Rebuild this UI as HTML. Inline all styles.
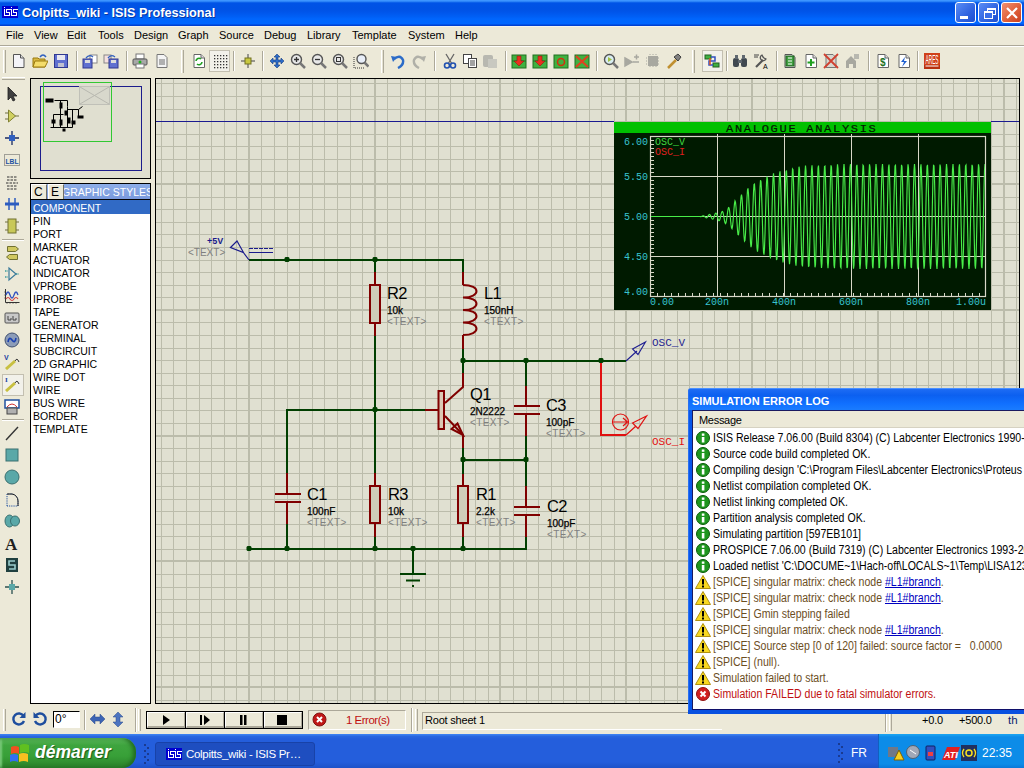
<!DOCTYPE html><html><head><meta charset="utf-8"><title>Colpitts_wiki - ISIS Professional</title><style>
*{margin:0;padding:0;box-sizing:border-box}
html,body{width:1024px;height:768px;overflow:hidden;background:#ECE9D8;font-family:"Liberation Sans",sans-serif;font-size:11px;color:#000}
.a{position:absolute}
.t{position:absolute;white-space:pre;line-height:1}
</style></head><body>
<div class="a" style="left:0;top:0;width:1024px;height:26px;background:linear-gradient(#3D95FF 0px,#3D95FF 1px,#1870F0 2px,#0053E6 3px,#0052E4 9px,#0055EA 12px,#0060F6 17px,#0066FD 19px,#0066FF 24px,#0040D0 25px,#0040D0 26px)"></div>
<svg class="a" style="left:2px;top:6px" width="16" height="12"><rect width="16" height="12" fill="#0000D0"/><rect x="2" y="1" width="1" height="1" fill="#fff"/><rect x="2" y="3" width="1" height="7" fill="#fff"/><rect x="2" y="9" width="6" height="1" fill="#fff"/><rect x="7" y="6" width="1" height="4" fill="#fff"/><rect x="4" y="6" width="4" height="1" fill="#fff"/><rect x="4" y="3" width="1" height="4" fill="#fff"/><rect x="4" y="3" width="5" height="1" fill="#fff"/><rect x="9" y="1" width="1" height="1" fill="#fff"/><rect x="9" y="3" width="1" height="7" fill="#fff"/><rect x="9" y="9" width="6" height="1" fill="#fff"/><rect x="14" y="6" width="1" height="4" fill="#fff"/><rect x="11" y="6" width="4" height="1" fill="#fff"/><rect x="11" y="3" width="1" height="4" fill="#fff"/><rect x="11" y="3" width="5" height="1" fill="#fff"/></svg>
<div class="t" style="left:23px;top:8px;font-size:12.7px;font-weight:bold;color:#0A1E70;opacity:.6">Colpitts_wiki - ISIS Professional</div>
<div class="t" style="left:22px;top:7px;font-size:12.7px;font-weight:bold;color:#fff">Colpitts_wiki - ISIS Professional</div>
<div class="a" style="left:955px;top:2px;width:21px;height:21px;border:1px solid #fff;border-radius:3px;background:linear-gradient(135deg,#5A8DF5,#2F63E0 60%,#1E4FD0)"><div class="a" style="left:4px;top:13px;width:8px;height:3px;background:#fff"></div></div>
<div class="a" style="left:978px;top:2px;width:21px;height:21px;border:1px solid #fff;border-radius:3px;background:linear-gradient(135deg,#5A8DF5,#2F63E0 60%,#1E4FD0)"><div class="a" style="left:8px;top:5px;width:9px;height:7px;border:1px solid #fff;border-top-width:2px"></div><div class="a" style="left:5px;top:8px;width:9px;height:8px;border:1px solid #fff;border-top-width:2px;background:#3A6EE8"></div></div>
<div class="a" style="left:1001px;top:2px;width:21px;height:21px;border:1px solid #fff;border-radius:3px;background:linear-gradient(135deg,#F09070,#E0603A 55%,#C84020)"><svg class="a" style="left:4px;top:4px" width="12" height="12"><path d="M1 1L11 11M11 1L1 11" stroke="#fff" stroke-width="2.2"/></svg></div>
<div class="a" style="left:0;top:26px;width:1024px;height:1px;background:#F4F3EE"></div>
<div class="t" style="left:6px;top:30px;font-size:11px">File</div>
<div class="t" style="left:34px;top:30px;font-size:11px">View</div>
<div class="t" style="left:67px;top:30px;font-size:11px">Edit</div>
<div class="t" style="left:98px;top:30px;font-size:11px">Tools</div>
<div class="t" style="left:134px;top:30px;font-size:11px">Design</div>
<div class="t" style="left:178px;top:30px;font-size:11px">Graph</div>
<div class="t" style="left:219px;top:30px;font-size:11px">Source</div>
<div class="t" style="left:264px;top:30px;font-size:11px">Debug</div>
<div class="t" style="left:307px;top:30px;font-size:11px">Library</div>
<div class="t" style="left:352px;top:30px;font-size:11px">Template</div>
<div class="t" style="left:408px;top:30px;font-size:11px">System</div>
<div class="t" style="left:455px;top:30px;font-size:11px">Help</div>
<div class="a" style="left:0;top:45px;width:1024px;height:1px;background:#ACA899"></div>
<div class="a" style="left:0;top:46px;width:1024px;height:1px;background:#fff"></div>
<div class="a" style="left:3px;top:50px;width:3px;height:23px;border-left:1px solid #fff;border-right:1px solid #ACA899;background:#E6E3D3"></div>
<div class="a" style="left:76px;top:51px;width:2px;height:20px;border-left:1px solid #ACA899;border-right:1px solid #fff"></div>
<div class="a" style="left:126px;top:51px;width:2px;height:20px;border-left:1px solid #ACA899;border-right:1px solid #fff"></div>
<div class="a" style="left:233px;top:51px;width:2px;height:20px;border-left:1px solid #ACA899;border-right:1px solid #fff"></div>
<div class="a" style="left:262px;top:51px;width:2px;height:20px;border-left:1px solid #ACA899;border-right:1px solid #fff"></div>
<div class="a" style="left:434px;top:51px;width:2px;height:20px;border-left:1px solid #ACA899;border-right:1px solid #fff"></div>
<div class="a" style="left:505px;top:51px;width:2px;height:20px;border-left:1px solid #ACA899;border-right:1px solid #fff"></div>
<div class="a" style="left:596px;top:51px;width:2px;height:20px;border-left:1px solid #ACA899;border-right:1px solid #fff"></div>
<div class="a" style="left:726px;top:51px;width:2px;height:20px;border-left:1px solid #ACA899;border-right:1px solid #fff"></div>
<div class="a" style="left:776px;top:51px;width:2px;height:20px;border-left:1px solid #ACA899;border-right:1px solid #fff"></div>
<div class="a" style="left:868px;top:51px;width:2px;height:20px;border-left:1px solid #ACA899;border-right:1px solid #fff"></div>
<div class="a" style="left:917px;top:51px;width:2px;height:20px;border-left:1px solid #ACA899;border-right:1px solid #fff"></div>
<div class="a" style="left:181px;top:50px;width:3px;height:23px;border-left:1px solid #fff;border-right:1px solid #ACA899;background:#E6E3D3"></div>
<div class="a" style="left:381px;top:50px;width:3px;height:23px;border-left:1px solid #fff;border-right:1px solid #ACA899;background:#E6E3D3"></div>
<div class="a" style="left:692px;top:50px;width:3px;height:23px;border-left:1px solid #fff;border-right:1px solid #ACA899;background:#E6E3D3"></div>
<div class="a" style="left:209px;top:50px;width:21px;height:22px;border:1px solid #C3BFB0;background:#F2F1EA"></div>
<div class="a" style="left:702px;top:50px;width:21px;height:22px;border:1px solid #C3BFB0;background:#F2F1EA"></div>
<svg class="a" style="left:12px;top:53px;" width="16" height="16" viewBox="0 0 16 16"><path d="M1.5 1.5h7l3.5 3.5v9.5H1.5z" fill="#F4F4F8" stroke="#555"/><path d="M8.5 1.5v3.5H12" fill="#ddd" stroke="#555"/></svg>
<svg class="a" style="left:32px;top:53px;" width="16" height="16" viewBox="0 0 16 16"><path d="M1 5h5l1 1h6v8H1z" fill="#D8B840" stroke="#9A7A10"/><path d="M3 8h13l-3 6H1z" fill="#F4DC6A" stroke="#9A7A10"/><path d="M8 4q3-4 6 0" fill="none" stroke="#3060C0" stroke-width="1.5"/></svg>
<svg class="a" style="left:53px;top:53px;" width="16" height="16" viewBox="0 0 16 16"><rect x="1.5" y="1.5" width="13" height="13" fill="#6070D0" stroke="#303890"/><rect x="4" y="2" width="8" height="5" fill="#E8E8F0"/><rect x="5" y="10" width="6" height="4" fill="#C0C0D0"/></svg>
<svg class="a" style="left:82px;top:53px;" width="16" height="16" viewBox="0 0 16 16"><rect x="8" y="2" width="7" height="8" fill="#fff" stroke="#888"/><rect x="1" y="6" width="9" height="9" fill="#6070D0" stroke="#303890"/><rect x="3" y="7" width="5" height="3" fill="#ddd"/><path d="M4 5q3-4 7-1" fill="none" stroke="#3060C0" stroke-width="1.3"/></svg>
<svg class="a" style="left:103px;top:53px;" width="16" height="16" viewBox="0 0 16 16"><rect x="1" y="2" width="7" height="8" fill="#F4E0E0" stroke="#888"/><rect x="6" y="6" width="9" height="9" fill="#6070D0" stroke="#303890"/><rect x="8" y="7" width="5" height="3" fill="#ddd"/><path d="M5 5q3-4 7-1" fill="none" stroke="#3060C0" stroke-width="1.3"/></svg>
<svg class="a" style="left:132px;top:53px;" width="16" height="16" viewBox="0 0 16 16"><rect x="4" y="1" width="8" height="5" fill="#fff" stroke="#777"/><rect x="1" y="6" width="14" height="6" rx="1" fill="#A8A8A8" stroke="#555"/><rect x="4" y="11" width="8" height="4" fill="#fff" stroke="#777"/><circle cx="8" cy="9" r="1.5" fill="#20B020"/></svg>
<svg class="a" style="left:154px;top:53px;" width="16" height="16" viewBox="0 0 16 16"><path d="M3 1.5h7l3 3v10H3z" fill="#F4F4F4" stroke="#777"/><rect x="5" y="6" width="6" height="6" fill="#B0B0B0"/></svg>
<svg class="a" style="left:191px;top:53px;" width="16" height="16" viewBox="0 0 16 16"><path d="M3 1.5h7l3.5 3.5v9.5h-10.5z" fill="#fff" stroke="#666" /><path d="M10 1.5v3.5h3.5" fill="#ddd" stroke="#666"/><path d="M5 8a3 3 0 0 1 5-2M11 9a3 3 0 0 1-5 2" fill="none" stroke="#20A020" stroke-width="1.6"/></svg>
<svg class="a" style="left:212px;top:53px;" width="16" height="16" viewBox="0 0 16 16"><rect x="2" y="2" width="1.3" height="1.3" fill="#333"/><rect x="2" y="5" width="1.3" height="1.3" fill="#333"/><rect x="2" y="8" width="1.3" height="1.3" fill="#333"/><rect x="2" y="11" width="1.3" height="1.3" fill="#333"/><rect x="2" y="14" width="1.3" height="1.3" fill="#333"/><rect x="5" y="2" width="1.3" height="1.3" fill="#333"/><rect x="5" y="5" width="1.3" height="1.3" fill="#333"/><rect x="5" y="8" width="1.3" height="1.3" fill="#333"/><rect x="5" y="11" width="1.3" height="1.3" fill="#333"/><rect x="5" y="14" width="1.3" height="1.3" fill="#333"/><rect x="8" y="2" width="1.3" height="1.3" fill="#333"/><rect x="8" y="5" width="1.3" height="1.3" fill="#333"/><rect x="8" y="8" width="1.3" height="1.3" fill="#333"/><rect x="8" y="11" width="1.3" height="1.3" fill="#333"/><rect x="8" y="14" width="1.3" height="1.3" fill="#333"/><rect x="11" y="2" width="1.3" height="1.3" fill="#333"/><rect x="11" y="5" width="1.3" height="1.3" fill="#333"/><rect x="11" y="8" width="1.3" height="1.3" fill="#333"/><rect x="11" y="11" width="1.3" height="1.3" fill="#333"/><rect x="11" y="14" width="1.3" height="1.3" fill="#333"/><rect x="14" y="2" width="1.3" height="1.3" fill="#333"/><rect x="14" y="5" width="1.3" height="1.3" fill="#333"/><rect x="14" y="8" width="1.3" height="1.3" fill="#333"/><rect x="14" y="11" width="1.3" height="1.3" fill="#333"/><rect x="14" y="14" width="1.3" height="1.3" fill="#333"/></svg>
<svg class="a" style="left:240px;top:53px;" width="16" height="16" viewBox="0 0 16 16"><path d="M8 1v14M1 8h14" stroke="#444" stroke-width="1"/><rect x="5" y="5" width="6" height="6" fill="#C8C840" stroke="#707020"/></svg>
<svg class="a" style="left:269px;top:53px;" width="16" height="16" viewBox="0 0 16 16"><path d="M8 1l3 3H9v3h3V5l3 3-3 3V9H9v3h2l-3 3-3-3h2V9H4v2L1 8l3-3v2h3V4H5z" fill="#2C6CC8" stroke="#1A3E80" stroke-width=".6"/></svg>
<svg class="a" style="left:290px;top:53px;" width="16" height="16" viewBox="0 0 16 16"><circle cx="6.5" cy="6.5" r="5" fill="#E8E8E8" stroke="#555" stroke-width="1.4"/><path d="M10 10l5 5" stroke="#777" stroke-width="2.5"/><path d="M4 6.5h5M6.5 4v5" stroke="#333" stroke-width="1.3"/></svg>
<svg class="a" style="left:311px;top:53px;" width="16" height="16" viewBox="0 0 16 16"><circle cx="6.5" cy="6.5" r="5" fill="#E8E8E8" stroke="#555" stroke-width="1.4"/><path d="M10 10l5 5" stroke="#777" stroke-width="2.5"/><path d="M4 6.5h5" stroke="#333" stroke-width="1.3"/></svg>
<svg class="a" style="left:332px;top:53px;" width="16" height="16" viewBox="0 0 16 16"><circle cx="6.5" cy="6.5" r="5" fill="#E8E8E8" stroke="#555" stroke-width="1.4"/><path d="M10 10l5 5" stroke="#777" stroke-width="2.5"/><rect x="4.5" y="4.5" width="4" height="4" fill="none" stroke="#333"/></svg>
<svg class="a" style="left:353px;top:53px;" width="16" height="16" viewBox="0 0 16 16"><path d="M1 4v11h10" fill="none" stroke="#333" stroke-dasharray="1 1"/><circle cx="8.5" cy="6" r="4.5" fill="#E8EEF8" stroke="#555" stroke-width="1.4"/><path d="M11.5 9.5l4 4" stroke="#777" stroke-width="2.5"/></svg>
<svg class="a" style="left:390px;top:53px;" width="16" height="16" viewBox="0 0 16 16"><path d="M4 6q6-5 9 1q1 5-5 8" fill="none" stroke="#2C6CC8" stroke-width="2.4"/><path d="M1 3l6 1-4 5z" fill="#2C6CC8"/></svg>
<svg class="a" style="left:411px;top:53px;" width="16" height="16" viewBox="0 0 16 16"><path d="M12 6q-6-5-9 1q-1 5 5 8" fill="none" stroke="#B0B0A8" stroke-width="2.4"/><path d="M15 3l-6 1 4 5z" fill="#B0B0A8"/></svg>
<svg class="a" style="left:442px;top:53px;" width="16" height="16" viewBox="0 0 16 16"><path d="M4 1l6 10M12 1L6 11" stroke="#666" stroke-width="1.3"/><circle cx="5" cy="12.5" r="2.5" fill="none" stroke="#2050B0" stroke-width="1.6"/><circle cx="11" cy="12.5" r="2.5" fill="none" stroke="#2050B0" stroke-width="1.6"/></svg>
<svg class="a" style="left:462px;top:53px;" width="16" height="16" viewBox="0 0 16 16"><rect x="1.5" y="1.5" width="8" height="9" fill="#fff" stroke="#444"/><rect x="6.5" y="5.5" width="8" height="9" fill="#fff" stroke="#444"/><path d="M8 8h5M8 10h5M8 12h5" stroke="#444"/></svg>
<svg class="a" style="left:482px;top:53px;" width="16" height="16" viewBox="0 0 16 16"><rect x="1" y="2" width="10" height="12" rx="2" fill="#B8B8B0"/><rect x="6" y="6" width="9" height="9" fill="#C8C8C0"/></svg>
<svg class="a" style="left:511px;top:53px;" width="16" height="16" viewBox="0 0 16 16"><rect x="1" y="2" width="14" height="13" fill="#40B040" stroke="#207020"/><path d="M1 8h14" stroke="#207020"/><path d="M6 3h4v5h3l-5 5-5-5h3z" fill="#E83020" stroke="#902010" stroke-width=".6"/></svg>
<svg class="a" style="left:532px;top:53px;" width="16" height="16" viewBox="0 0 16 16"><rect x="1" y="2" width="14" height="13" fill="#40B040" stroke="#207020"/><path d="M1 8h14" stroke="#207020"/><path d="M6 3h4v5h3l-5 5-5-5h3z" fill="#E83020" stroke="#902010" stroke-width=".6"/></svg>
<svg class="a" style="left:553px;top:53px;" width="16" height="16" viewBox="0 0 16 16"><rect x="1" y="2" width="14" height="13" fill="#40B040" stroke="#207020"/><circle cx="8" cy="9" r="3.5" fill="none" stroke="#D03010" stroke-width="1.5"/></svg>
<svg class="a" style="left:574px;top:53px;" width="16" height="16" viewBox="0 0 16 16"><rect x="1" y="2" width="14" height="13" fill="#40B040" stroke="#207020"/><path d="M2 3l12 11M14 3L2 14" stroke="#E04020" stroke-width="2"/></svg>
<svg class="a" style="left:603px;top:53px;" width="16" height="16" viewBox="0 0 16 16"><circle cx="6.5" cy="6.5" r="5" fill="#D8ECF0" stroke="#555" stroke-width="1.4"/><path d="M5 4v5l4-2.5z" fill="#A0C040"/><path d="M10 10l5 5" stroke="#777" stroke-width="2.5"/></svg>
<svg class="a" style="left:624px;top:53px;" width="16" height="16" viewBox="0 0 16 16"><path d="M1 5l7 4-7 4zM10 4h5M12.5 1.5v5M9 9h6" fill="#A8A8A0" stroke="#A8A8A0" stroke-width="1.5"/></svg>
<svg class="a" style="left:645px;top:53px;" width="16" height="16" viewBox="0 0 16 16"><rect x="3" y="3" width="10" height="10" fill="#A8A8A0"/><path d="M1 5h14M1 8h14M1 11h14M5 1v14M8 1v14M11 1v14" stroke="#A8A8A0" stroke-dasharray="1 2"/></svg>
<svg class="a" style="left:666px;top:53px;" width="16" height="16" viewBox="0 0 16 16"><path d="M2 15l8-8" stroke="#C09030" stroke-width="2.5"/><path d="M8 4l4-3 3 3-3 4z" fill="#808080" stroke="#404040"/></svg>
<svg class="a" style="left:704px;top:53px;" width="16" height="16" viewBox="0 0 16 16"><rect x="1" y="2" width="6" height="4" fill="#40B040" stroke="#206020"/><rect x="9" y="10" width="6" height="4" fill="#40B040" stroke="#206020"/><path d="M7 4h4v4H5v4h4" fill="none" stroke="#3050C0" stroke-width="1.5"/><path d="M6 5v7" stroke="#E05020" stroke-width="1.5"/></svg>
<svg class="a" style="left:732px;top:53px;" width="16" height="16" viewBox="0 0 16 16"><rect x="1" y="5" width="6" height="9" rx="2" fill="#404850"/><rect x="9" y="5" width="6" height="9" rx="2" fill="#404850"/><rect x="3" y="2" width="3" height="4" fill="#606870"/><rect x="10" y="2" width="3" height="4" fill="#606870"/><rect x="6" y="7" width="4" height="3" fill="#606870"/></svg>
<svg class="a" style="left:753px;top:53px;" width="16" height="16" viewBox="0 0 16 16"><path d="M1 2h5M1 4h4" stroke="#444"/><path d="M3 14l7-7" stroke="#555" stroke-width="2.2"/><path d="M9 2a3 3 0 1 0 4 4l-2-1-1-1z" fill="none" stroke="#555" stroke-width="1.3"/><text x="10" y="15.5" font-size="7" font-family="Liberation Sans" fill="#000">A</text></svg>
<svg class="a" style="left:782px;top:53px;" width="16" height="16" viewBox="0 0 16 16"><path d="M3 1.5h7l3 3v10H3z" fill="#fff" stroke="#555"/><rect x="4" y="3" width="8" height="10" fill="#40A040" stroke="#206020"/><path d="M6 5h4M6 8h4M6 11h4" stroke="#fff"/></svg>
<svg class="a" style="left:803px;top:53px;" width="16" height="16" viewBox="0 0 16 16"><path d="M3 1.5h7l3.5 3.5v9.5h-10.5z" fill="#fff" stroke="#666" /><path d="M10 1.5v3.5h3.5" fill="#ddd" stroke="#666"/><path d="M8 6v7M4.5 9.5h7" stroke="#20A020" stroke-width="2"/></svg>
<svg class="a" style="left:823px;top:53px;" width="16" height="16" viewBox="0 0 16 16"><path d="M3 1.5h7l3 3v10H3z" fill="#D8D8D0" stroke="#777"/><path d="M1 1l14 14M15 1L1 15" stroke="#D04030" stroke-width="1.8"/></svg>
<svg class="a" style="left:844px;top:53px;" width="16" height="16" viewBox="0 0 16 16"><path d="M2 15V8l5-5 5 5v7h-3v-4H5v4z" fill="#A8A8A0"/><rect x="10" y="1" width="5" height="5" fill="#B8B8B0"/></svg>
<svg class="a" style="left:875px;top:53px;" width="16" height="16" viewBox="0 0 16 16"><path d="M3 1.5h7l3.5 3.5v9.5h-10.5z" fill="#fff" stroke="#666" /><path d="M10 1.5v3.5h3.5" fill="#ddd" stroke="#666"/><text x="5" y="13" font-size="10" font-family="Liberation Sans" font-weight="bold" fill="#207020">$</text></svg>
<svg class="a" style="left:896px;top:53px;" width="16" height="16" viewBox="0 0 16 16"><path d="M3 1.5h7l3.5 3.5v9.5h-10.5z" fill="#fff" stroke="#666" /><path d="M10 1.5v3.5h3.5" fill="#ddd" stroke="#666"/><path d="M9 4l-4 5h3l-2 5 5-6H8z" fill="#2060D0"/></svg>
<svg class="a" style="left:924px;top:53px;" width="16" height="16" viewBox="0 0 16 16"><rect x="0" y="0" width="16" height="16" fill="#D04018"/><rect x="0" y="12" width="16" height="4" fill="#B83010"/><text x="1.5" y="11" font-size="12" font-family="Liberation Sans" fill="#fff" textLength="13" lengthAdjust="spacingAndGlyphs">ARES</text><path d="M1.5 13h13" stroke="#fff"/></svg>
<div class="a" style="left:0;top:76px;width:1024px;height:1px;background:#ECE9D8"></div>
<div class="a" style="left:2px;top:77px;width:23px;height:3px;border-top:1px solid #fff;border-bottom:1px solid #ACA899;background:#E6E3D3"></div>
<div class="a" style="left:2px;top:239px;width:22px;height:2px;border-top:1px solid #ACA899;border-bottom:1px solid #fff"></div>
<div class="a" style="left:2px;top:419px;width:22px;height:2px;border-top:1px solid #ACA899;border-bottom:1px solid #fff"></div>
<div class="a" style="left:2px;top:374px;width:22px;height:22px;border:1px solid #C3BFB0;background:#F2F1EA"></div>
<svg class="a" style="left:4px;top:86px;" width="16" height="16" viewBox="0 0 16 16"><path d="M4 1v13l3-3 2 4 2-1-2-4h4z" fill="#404040" stroke="#202020" stroke-width=".8"/></svg>
<svg class="a" style="left:4px;top:108px;" width="16" height="16" viewBox="0 0 16 16"><path d="M1 5h4M1 11h4M11 8h4" stroke="#707040" stroke-width="1.2"/><path d="M4.5 2v12l7-6z" fill="#D0D060" stroke="#808030"/></svg>
<svg class="a" style="left:4px;top:130px;" width="16" height="16" viewBox="0 0 16 16"><path d="M8 1v14M1 8h14" stroke="#1A2A60" stroke-width="1.3"/><rect x="5" y="5" width="6" height="6" fill="#3060C0"/></svg>
<svg class="a" style="left:4px;top:152px;" width="16" height="16" viewBox="0 0 16 16"><rect x="0.5" y="2.5" width="15" height="11" fill="none" stroke="#555" stroke-dasharray="1 1"/><text x="1.5" y="11.5" font-size="8" font-weight="bold" font-family="Liberation Sans" fill="#2050A0" textLength="13" lengthAdjust="spacingAndGlyphs">LBL</text></svg>
<svg class="a" style="left:4px;top:174px;" width="16" height="16" viewBox="0 0 16 16"><path d="M3 3h10M3 6h10M2 9h12M3 12h10M3 15h10" stroke="#333" stroke-dasharray="2.5 1"/></svg>
<svg class="a" style="left:4px;top:196px;" width="16" height="16" viewBox="0 0 16 16"><path d="M1 8h14" stroke="#2C5CC0" stroke-width="3"/><path d="M5 2v12M11 2v12" stroke="#2C5CC0" stroke-width="1.5"/></svg>
<svg class="a" style="left:4px;top:218px;" width="16" height="16" viewBox="0 0 16 16"><path d="M1 4h14M1 12h14" stroke="#707040"/><rect x="4" y="1" width="8" height="14" fill="#C8C858" stroke="#707030"/></svg>
<svg class="a" style="left:4px;top:245px;" width="16" height="16" viewBox="0 0 16 16"><path d="M3.5 1.5h8l3 2.5-3 2.5h-8z" fill="#D0C860" stroke="#707030"/><path d="M5.5 9.5h8v5h-8l-3-2.5z" fill="#D0C860" stroke="#707030"/></svg>
<svg class="a" style="left:4px;top:266px;" width="16" height="16" viewBox="0 0 16 16"><path d="M1 5h3M1 11h3M12 8h3" stroke="#3A9A9A" stroke-width="1.3" stroke-dasharray="1.5 1"/><path d="M5 2v12l7-6z" fill="none" stroke="#3A7A9A" stroke-width="1.2"/></svg>
<svg class="a" style="left:4px;top:288px;" width="16" height="16" viewBox="0 0 16 16"><path d="M1.5 1v13.5h14" stroke="#333" fill="none"/><path d="M3 15.5v-1M6 15.5v-1M9 15.5v-1M12 15.5v-1M0.5 4h1M0.5 7h1M0.5 10h1" stroke="#333"/><path d="M2 7q2-6 4 0t4 0 4 0" fill="none" stroke="#3050C0" stroke-width="1.3"/><path d="M2 11q2-3 4 0t4 0 4 0" fill="none" stroke="#D04040" stroke-width="1.1"/></svg>
<svg class="a" style="left:4px;top:310px;" width="16" height="16" viewBox="0 0 16 16"><rect x="1" y="3" width="14" height="10" rx="1" fill="#C8C8C8" stroke="#555"/><path d="M4 6v4h3V8M9 6v4h3V8" stroke="#444" fill="none"/></svg>
<svg class="a" style="left:4px;top:332px;" width="16" height="16" viewBox="0 0 16 16"><circle cx="8" cy="8" r="7" fill="#8C9CB8" stroke="#405070"/><path d="M4 10q1-6 4-2t4-2" fill="none" stroke="#1A40B0" stroke-width="1.6"/></svg>
<svg class="a" style="left:4px;top:354px;" width="16" height="16" viewBox="0 0 16 16"><text x="0" y="6" font-size="7" font-family="Liberation Sans" fill="#1A40A0" font-weight="bold">V</text><path d="M2 15l9-8" stroke="#C8C040" stroke-width="3"/><path d="M11 7q2-4 4 1" fill="none" stroke="#333"/></svg>
<svg class="a" style="left:4px;top:376px;" width="16" height="16" viewBox="0 0 16 16"><text x="1" y="6" font-size="7" font-family="Liberation Serif" fill="#1A40A0" font-weight="bold">I</text><path d="M2 15l9-8" stroke="#C8C040" stroke-width="3"/><path d="M11 7q2-4 4 1" fill="none" stroke="#333"/></svg>
<svg class="a" style="left:4px;top:399px;" width="16" height="16" viewBox="0 0 16 16"><rect x="1" y="1" width="14" height="8" fill="#fff" stroke="#2050A0" stroke-width="1.5"/><path d="M3 8q5-6 10 0" stroke="#D03030" fill="none"/><rect x="3" y="9" width="10" height="6" fill="#B0B0B0" stroke="#444"/></svg>
<svg class="a" style="left:4px;top:425px;" width="16" height="16" viewBox="0 0 16 16"><path d="M2 15L14 2" stroke="#333" stroke-width="1.4"/></svg>
<svg class="a" style="left:4px;top:447px;" width="16" height="16" viewBox="0 0 16 16"><rect x="2" y="2" width="12" height="12" fill="#5AA8A8" stroke="#3A7070"/></svg>
<svg class="a" style="left:4px;top:469px;" width="16" height="16" viewBox="0 0 16 16"><circle cx="8" cy="8" r="7" fill="#5AA8A8" stroke="#3A7070"/></svg>
<svg class="a" style="left:4px;top:491px;" width="16" height="16" viewBox="0 0 16 16"><path d="M3 15V3h5a7 7 0 0 1 6 7v5z" fill="none" stroke="#2050A0" stroke-dasharray="1.2 1"/><path d="M3 3h5a7 7 0 0 1 6 7v5" fill="none" stroke="#222"/></svg>
<svg class="a" style="left:4px;top:513px;" width="16" height="16" viewBox="0 0 16 16"><ellipse cx="5.5" cy="8" rx="4.5" ry="6" fill="#5AA8A8" stroke="#3A7070"/><ellipse cx="11" cy="8" rx="4.5" ry="5" fill="#5AA8A8" stroke="#3A7070"/></svg>
<svg class="a" style="left:4px;top:535px;" width="16" height="16" viewBox="0 0 16 16"><text x="1" y="15" font-size="17" font-family="Liberation Serif" font-weight="bold" fill="#202020">A</text></svg>
<svg class="a" style="left:4px;top:557px;" width="16" height="16" viewBox="0 0 16 16"><rect x="2" y="1" width="12" height="14" fill="#204040"/><path d="M11 4H5v4h6v4H5" fill="none" stroke="#9CC" stroke-width="1.6"/></svg>
<svg class="a" style="left:4px;top:579px;" width="16" height="16" viewBox="0 0 16 16"><path d="M8 1v14M1 8h14" stroke="#2A5050" stroke-width="1.3"/><rect x="5" y="5" width="6" height="6" fill="#5AA8A8"/></svg>
<div class="a" style="left:30px;top:78px;width:121px;height:101px;border:1px solid #000;background:#E0DFD0"></div>
<div class="a" style="left:40px;top:86px;width:102px;height:85px;border:1px solid #1C1C8C"></div>
<div class="a" style="left:79px;top:86px;width:31px;height:19px;border:1px solid #C0C0B8;background:#D8D8CC"></div>
<svg class="a" style="left:79px;top:86px" width="31" height="19"><path d="M1 1L30 18M30 1L1 18" stroke="#B8B8B0"/></svg>
<div class="a" style="left:43px;top:82px;width:69px;height:60px;border:1px solid #32C832"></div>
<svg class="a" style="left:40px;top:80px" width="60" height="60"><g stroke="#000" fill="none" stroke-width="1"><path d="M14.5 20.5h13v6M20.5 20.5v27M27.5 26.5v21M13.5 34.5h10M13.5 34.5v13M10.5 47.5h22M32.5 29.5v18M27.5 29.5h11l4 -3M38.5 29.5v7h4"/><rect x="6" y="19" width="7" height="3" fill="#000"/><rect x="8" y="20" width="3" height="1" fill="#fff"/><rect x="20" y="23" width="2" height="5" fill="#000"/><rect x="20" y="40" width="2" height="5" fill="#000"/><rect x="25" y="31" width="2" height="4" fill="#000"/><rect x="28" y="38" width="2" height="5" fill="#000"/><rect x="12" y="40" width="3" height="3" fill="#000"/><rect x="32" y="41" width="3" height="3" fill="#000"/><rect x="38" y="36" width="5" height="2" fill="#000"/><rect x="23" y="49" width="2" height="2" fill="#000"/></g></svg>
<div class="a" style="left:30px;top:183px;width:121px;height:521px;border:1px solid #000;background:#fff"></div>
<div class="a" style="left:31px;top:184px;width:119px;height:16px;background:linear-gradient(#8EAEE8,#7898DC)"></div>
<div class="a" style="left:31px;top:184px;width:16px;height:16px;background:#ECE9D8;border-top:1px solid #fff;border-left:1px solid #fff;border-right:1px solid #716F64;border-bottom:1px solid #716F64"></div>
<div class="a" style="left:48px;top:184px;width:16px;height:16px;background:#ECE9D8;border-top:1px solid #fff;border-left:1px solid #fff;border-right:1px solid #716F64;border-bottom:1px solid #716F64"></div>
<div class="t" style="left:34px;top:186px;font-size:12px">C</div>
<div class="t" style="left:51px;top:186px;font-size:12px">E</div>
<div class="a" style="left:64px;top:184px;width:86px;height:16px;overflow:hidden"><div class="t" style="left:-2px;top:3px;font-size:10.5px;color:#fff">GRAPHIC STYLES</div></div>
<div class="a" style="left:31px;top:199px;width:119px;height:1px;background:#000"></div>
<div class="a" style="left:31px;top:200px;width:119px;height:14px;background:#316AC5"></div>
<div class="t" style="left:33px;top:203px;font-size:10.5px;color:#fff">COMPONENT</div>
<div class="t" style="left:33px;top:216px;font-size:10.5px;color:#000">PIN</div>
<div class="t" style="left:33px;top:229px;font-size:10.5px;color:#000">PORT</div>
<div class="t" style="left:33px;top:242px;font-size:10.5px;color:#000">MARKER</div>
<div class="t" style="left:33px;top:255px;font-size:10.5px;color:#000">ACTUATOR</div>
<div class="t" style="left:33px;top:268px;font-size:10.5px;color:#000">INDICATOR</div>
<div class="t" style="left:33px;top:281px;font-size:10.5px;color:#000">VPROBE</div>
<div class="t" style="left:33px;top:294px;font-size:10.5px;color:#000">IPROBE</div>
<div class="t" style="left:33px;top:307px;font-size:10.5px;color:#000">TAPE</div>
<div class="t" style="left:33px;top:320px;font-size:10.5px;color:#000">GENERATOR</div>
<div class="t" style="left:33px;top:333px;font-size:10.5px;color:#000">TERMINAL</div>
<div class="t" style="left:33px;top:346px;font-size:10.5px;color:#000">SUBCIRCUIT</div>
<div class="t" style="left:33px;top:359px;font-size:10.5px;color:#000">2D GRAPHIC</div>
<div class="t" style="left:33px;top:372px;font-size:10.5px;color:#000">WIRE DOT</div>
<div class="t" style="left:33px;top:385px;font-size:10.5px;color:#000">WIRE</div>
<div class="t" style="left:33px;top:398px;font-size:10.5px;color:#000">BUS WIRE</div>
<div class="t" style="left:33px;top:411px;font-size:10.5px;color:#000">BORDER</div>
<div class="t" style="left:33px;top:424px;font-size:10.5px;color:#000">TEMPLATE</div>
<div class="a" style="left:155px;top:78px;width:865px;height:626px;border:1px solid #000;background:#E0E0D1"></div>
<svg class="a" style="left:0;top:0" width="1024" height="768" viewBox="0 0 1024 768"><rect x="161" y="79" width="1" height="624" fill="#BBBCAB"/><rect x="173" y="79" width="1" height="624" fill="#BBBCAB"/><rect x="186" y="79" width="1" height="624" fill="#BBBCAB"/><rect x="199" y="79" width="1" height="624" fill="#BBBCAB"/><rect x="211" y="79" width="1" height="624" fill="#BBBCAB"/><rect x="224" y="79" width="1" height="624" fill="#BBBCAB"/><rect x="236" y="79" width="1" height="624" fill="#BBBCAB"/><rect x="248" y="79" width="2" height="624" fill="#BBBCAB"/><rect x="261" y="79" width="1" height="624" fill="#BBBCAB"/><rect x="274" y="79" width="1" height="624" fill="#BBBCAB"/><rect x="287" y="79" width="1" height="624" fill="#BBBCAB"/><rect x="299" y="79" width="1" height="624" fill="#BBBCAB"/><rect x="312" y="79" width="1" height="624" fill="#BBBCAB"/><rect x="324" y="79" width="1" height="624" fill="#BBBCAB"/><rect x="337" y="79" width="1" height="624" fill="#BBBCAB"/><rect x="350" y="79" width="1" height="624" fill="#BBBCAB"/><rect x="362" y="79" width="1" height="624" fill="#BBBCAB"/><rect x="374" y="79" width="2" height="624" fill="#BBBCAB"/><rect x="387" y="79" width="1" height="624" fill="#BBBCAB"/><rect x="400" y="79" width="1" height="624" fill="#BBBCAB"/><rect x="412" y="79" width="1" height="624" fill="#BBBCAB"/><rect x="425" y="79" width="1" height="624" fill="#BBBCAB"/><rect x="438" y="79" width="1" height="624" fill="#BBBCAB"/><rect x="450" y="79" width="1" height="624" fill="#BBBCAB"/><rect x="463" y="79" width="1" height="624" fill="#BBBCAB"/><rect x="475" y="79" width="1" height="624" fill="#BBBCAB"/><rect x="488" y="79" width="1" height="624" fill="#BBBCAB"/><rect x="499" y="79" width="2" height="624" fill="#BBBCAB"/><rect x="513" y="79" width="1" height="624" fill="#BBBCAB"/><rect x="526" y="79" width="1" height="624" fill="#BBBCAB"/><rect x="538" y="79" width="1" height="624" fill="#BBBCAB"/><rect x="551" y="79" width="1" height="624" fill="#BBBCAB"/><rect x="563" y="79" width="1" height="624" fill="#BBBCAB"/><rect x="576" y="79" width="1" height="624" fill="#BBBCAB"/><rect x="589" y="79" width="1" height="624" fill="#BBBCAB"/><rect x="601" y="79" width="1" height="624" fill="#BBBCAB"/><rect x="614" y="79" width="1" height="624" fill="#BBBCAB"/><rect x="625" y="79" width="2" height="624" fill="#BBBCAB"/><rect x="639" y="79" width="1" height="624" fill="#BBBCAB"/><rect x="651" y="79" width="1" height="624" fill="#BBBCAB"/><rect x="664" y="79" width="1" height="624" fill="#BBBCAB"/><rect x="677" y="79" width="1" height="624" fill="#BBBCAB"/><rect x="689" y="79" width="1" height="624" fill="#BBBCAB"/><rect x="702" y="79" width="1" height="624" fill="#BBBCAB"/><rect x="714" y="79" width="1" height="624" fill="#BBBCAB"/><rect x="727" y="79" width="1" height="624" fill="#BBBCAB"/><rect x="739" y="79" width="1" height="624" fill="#BBBCAB"/><rect x="751" y="79" width="2" height="624" fill="#BBBCAB"/><rect x="765" y="79" width="1" height="624" fill="#BBBCAB"/><rect x="777" y="79" width="1" height="624" fill="#BBBCAB"/><rect x="790" y="79" width="1" height="624" fill="#BBBCAB"/><rect x="802" y="79" width="1" height="624" fill="#BBBCAB"/><rect x="815" y="79" width="1" height="624" fill="#BBBCAB"/><rect x="828" y="79" width="1" height="624" fill="#BBBCAB"/><rect x="840" y="79" width="1" height="624" fill="#BBBCAB"/><rect x="853" y="79" width="1" height="624" fill="#BBBCAB"/><rect x="865" y="79" width="1" height="624" fill="#BBBCAB"/><rect x="877" y="79" width="2" height="624" fill="#BBBCAB"/><rect x="890" y="79" width="1" height="624" fill="#BBBCAB"/><rect x="903" y="79" width="1" height="624" fill="#BBBCAB"/><rect x="916" y="79" width="1" height="624" fill="#BBBCAB"/><rect x="928" y="79" width="1" height="624" fill="#BBBCAB"/><rect x="941" y="79" width="1" height="624" fill="#BBBCAB"/><rect x="953" y="79" width="1" height="624" fill="#BBBCAB"/><rect x="966" y="79" width="1" height="624" fill="#BBBCAB"/><rect x="978" y="79" width="1" height="624" fill="#BBBCAB"/><rect x="991" y="79" width="1" height="624" fill="#BBBCAB"/><rect x="1003" y="79" width="2" height="624" fill="#BBBCAB"/><rect x="1016" y="79" width="1" height="624" fill="#BBBCAB"/><rect x="156" y="83" width="863" height="1" fill="#BBBCAB"/><rect x="156" y="96" width="863" height="1" fill="#BBBCAB"/><rect x="156" y="109" width="863" height="1" fill="#BBBCAB"/><rect x="156" y="121" width="863" height="1" fill="#BBBCAB"/><rect x="156" y="134" width="863" height="1" fill="#BBBCAB"/><rect x="156" y="146" width="863" height="1" fill="#BBBCAB"/><rect x="156" y="159" width="863" height="1" fill="#BBBCAB"/><rect x="156" y="171" width="863" height="1" fill="#BBBCAB"/><rect x="156" y="183" width="863" height="2" fill="#BBBCAB"/><rect x="156" y="197" width="863" height="1" fill="#BBBCAB"/><rect x="156" y="209" width="863" height="1" fill="#BBBCAB"/><rect x="156" y="222" width="863" height="1" fill="#BBBCAB"/><rect x="156" y="234" width="863" height="1" fill="#BBBCAB"/><rect x="156" y="247" width="863" height="1" fill="#BBBCAB"/><rect x="156" y="260" width="863" height="1" fill="#BBBCAB"/><rect x="156" y="272" width="863" height="1" fill="#BBBCAB"/><rect x="156" y="285" width="863" height="1" fill="#BBBCAB"/><rect x="156" y="297" width="863" height="1" fill="#BBBCAB"/><rect x="156" y="309" width="863" height="2" fill="#BBBCAB"/><rect x="156" y="322" width="863" height="1" fill="#BBBCAB"/><rect x="156" y="335" width="863" height="1" fill="#BBBCAB"/><rect x="156" y="348" width="863" height="1" fill="#BBBCAB"/><rect x="156" y="360" width="863" height="1" fill="#BBBCAB"/><rect x="156" y="373" width="863" height="1" fill="#BBBCAB"/><rect x="156" y="385" width="863" height="1" fill="#BBBCAB"/><rect x="156" y="398" width="863" height="1" fill="#BBBCAB"/><rect x="156" y="410" width="863" height="1" fill="#BBBCAB"/><rect x="156" y="423" width="863" height="1" fill="#BBBCAB"/><rect x="156" y="435" width="863" height="2" fill="#BBBCAB"/><rect x="156" y="448" width="863" height="1" fill="#BBBCAB"/><rect x="156" y="461" width="863" height="1" fill="#BBBCAB"/><rect x="156" y="473" width="863" height="1" fill="#BBBCAB"/><rect x="156" y="486" width="863" height="1" fill="#BBBCAB"/><rect x="156" y="499" width="863" height="1" fill="#BBBCAB"/><rect x="156" y="511" width="863" height="1" fill="#BBBCAB"/><rect x="156" y="524" width="863" height="1" fill="#BBBCAB"/><rect x="156" y="536" width="863" height="1" fill="#BBBCAB"/><rect x="156" y="549" width="863" height="1" fill="#BBBCAB"/><rect x="156" y="560" width="863" height="2" fill="#BBBCAB"/><rect x="156" y="574" width="863" height="1" fill="#BBBCAB"/><rect x="156" y="587" width="863" height="1" fill="#BBBCAB"/><rect x="156" y="599" width="863" height="1" fill="#BBBCAB"/><rect x="156" y="612" width="863" height="1" fill="#BBBCAB"/><rect x="156" y="624" width="863" height="1" fill="#BBBCAB"/><rect x="156" y="637" width="863" height="1" fill="#BBBCAB"/><rect x="156" y="650" width="863" height="1" fill="#BBBCAB"/><rect x="156" y="662" width="863" height="1" fill="#BBBCAB"/><rect x="156" y="675" width="863" height="1" fill="#BBBCAB"/><rect x="156" y="686" width="863" height="2" fill="#BBBCAB"/><rect x="156" y="700" width="863" height="1" fill="#BBBCAB"/><rect x="156" y="121" width="458" height="1" fill="#1A1A90"/><rect x="991" y="121" width="28" height="1" fill="#1A1A90"/><polyline points="249,260 463,260 463,272" fill="none" stroke="#003F00" stroke-width="2" stroke-linejoin="miter" stroke-linecap="butt"/><polyline points="375,260 375,272" fill="none" stroke="#003F00" stroke-width="2" stroke-linejoin="miter" stroke-linecap="butt"/><polyline points="375,336 375,473" fill="none" stroke="#003F00" stroke-width="2" stroke-linejoin="miter" stroke-linecap="butt"/><polyline points="425,410 287,410 287,473" fill="none" stroke="#003F00" stroke-width="2" stroke-linejoin="miter" stroke-linecap="butt"/><polyline points="463,349 463,373" fill="none" stroke="#003F00" stroke-width="2" stroke-linejoin="miter" stroke-linecap="butt"/><polyline points="463,361 626,361" fill="none" stroke="#003F00" stroke-width="2" stroke-linejoin="miter" stroke-linecap="butt"/><polyline points="526,361 526,386" fill="none" stroke="#003F00" stroke-width="2" stroke-linejoin="miter" stroke-linecap="butt"/><polyline points="526,436 526,486" fill="none" stroke="#003F00" stroke-width="2" stroke-linejoin="miter" stroke-linecap="butt"/><polyline points="463,448 463,474" fill="none" stroke="#003F00" stroke-width="2" stroke-linejoin="miter" stroke-linecap="butt"/><polyline points="463,460 526,460" fill="none" stroke="#003F00" stroke-width="2" stroke-linejoin="miter" stroke-linecap="butt"/><polyline points="249,549 526,549 526,537" fill="none" stroke="#003F00" stroke-width="2" stroke-linejoin="miter" stroke-linecap="butt"/><polyline points="287,524 287,549" fill="none" stroke="#003F00" stroke-width="2" stroke-linejoin="miter" stroke-linecap="butt"/><polyline points="375,537 375,549" fill="none" stroke="#003F00" stroke-width="2" stroke-linejoin="miter" stroke-linecap="butt"/><polyline points="463,537 463,549" fill="none" stroke="#003F00" stroke-width="2" stroke-linejoin="miter" stroke-linecap="butt"/><polyline points="413,549 413,574" fill="none" stroke="#003F00" stroke-width="2" stroke-linejoin="miter" stroke-linecap="butt"/><polyline points="400,574 426,574" fill="none" stroke="#003F00" stroke-width="2" stroke-linejoin="miter" stroke-linecap="butt"/><polyline points="406,580.5 420,580.5" fill="none" stroke="#003F00" stroke-width="2" stroke-linejoin="miter" stroke-linecap="butt"/><rect x="412" y="585" width="2" height="2" fill="#003F00"/><polyline points="375,272 375,285" fill="none" stroke="#800000" stroke-width="2" stroke-linejoin="miter" stroke-linecap="butt"/><rect x="370" y="285" width="10" height="38" fill="#CFCDBA" stroke="#800000" stroke-width="2"/><polyline points="375,323 375,336" fill="none" stroke="#800000" stroke-width="2" stroke-linejoin="miter" stroke-linecap="butt"/><polyline points="375,473 375,486" fill="none" stroke="#800000" stroke-width="2" stroke-linejoin="miter" stroke-linecap="butt"/><rect x="370" y="486" width="10" height="37" fill="#CFCDBA" stroke="#800000" stroke-width="2"/><polyline points="375,523 375,537" fill="none" stroke="#800000" stroke-width="2" stroke-linejoin="miter" stroke-linecap="butt"/><polyline points="463,474 463,486" fill="none" stroke="#800000" stroke-width="2" stroke-linejoin="miter" stroke-linecap="butt"/><rect x="458" y="486" width="10" height="37" fill="#CFCDBA" stroke="#800000" stroke-width="2"/><polyline points="463,523 463,537" fill="none" stroke="#800000" stroke-width="2" stroke-linejoin="miter" stroke-linecap="butt"/><polyline points="463,272 463,285" fill="none" stroke="#800000" stroke-width="2" stroke-linejoin="miter" stroke-linecap="butt"/><path d="M463 285 c18 0 18 12.5 0 12.5 c18 0 18 12.5 0 12.5 c18 0 18 12.5 0 12.5 c18 0 18 12.5 0 12.5" fill="none" stroke="#800000" stroke-width="2"/><polyline points="463,335 463,349" fill="none" stroke="#800000" stroke-width="2" stroke-linejoin="miter" stroke-linecap="butt"/><polyline points="463,373 463,387 445,403" fill="none" stroke="#800000" stroke-width="2" stroke-linejoin="miter" stroke-linecap="butt"/><polyline points="526,386 526,406" fill="none" stroke="#800000" stroke-width="2" stroke-linejoin="miter" stroke-linecap="butt"/><polyline points="526,414 526,436" fill="none" stroke="#800000" stroke-width="2" stroke-linejoin="miter" stroke-linecap="butt"/><rect x="514" y="405" width="26" height="2" fill="#800000"/><rect x="514" y="413" width="26" height="2" fill="#800000"/><polyline points="526,486 526,507" fill="none" stroke="#800000" stroke-width="2" stroke-linejoin="miter" stroke-linecap="butt"/><polyline points="526,515 526,537" fill="none" stroke="#800000" stroke-width="2" stroke-linejoin="miter" stroke-linecap="butt"/><rect x="514" y="506" width="26" height="2" fill="#800000"/><rect x="514" y="514" width="26" height="2" fill="#800000"/><polyline points="287,473 287,494" fill="none" stroke="#800000" stroke-width="2" stroke-linejoin="miter" stroke-linecap="butt"/><polyline points="287,502 287,524" fill="none" stroke="#800000" stroke-width="2" stroke-linejoin="miter" stroke-linecap="butt"/><rect x="275" y="493" width="26" height="2" fill="#800000"/><rect x="275" y="501" width="26" height="2" fill="#800000"/><polyline points="425,410 438,410" fill="none" stroke="#800000" stroke-width="2" stroke-linejoin="miter" stroke-linecap="butt"/><rect x="438.5" y="391" width="5.5" height="38" fill="#DCC8B4" stroke="#800000" stroke-width="2"/><polyline points="445,416 463,435 463,448" fill="none" stroke="#800000" stroke-width="2" stroke-linejoin="miter" stroke-linecap="butt"/><path d="M451.5 429 L457.5 423.5 L463 435 Z" fill="none" stroke="#800000" stroke-width="2" stroke-linejoin="miter"/><path d="M249 260 L243 252 M230.5 247.5 L237 241 L243.5 252.5 Z" fill="none" stroke="#1A1A8C" stroke-width="1.2"/><path d="M249 248.5h24" stroke="#1A1A8C" stroke-width="1" stroke-dasharray="4 1"/><path d="M249 252.5h24" stroke="#1A1A8C" stroke-width="1"/><path d="M626 361 L637 351 M632.5 349 L645.5 342 L638 354.5 Z" fill="none" stroke="#1E1E90" stroke-width="1.1"/><polyline points="601,361 601,435 626,435" fill="none" stroke="#E01010" stroke-width="2" stroke-linejoin="miter" stroke-linecap="butt"/><circle cx="620.5" cy="422" r="8" fill="none" stroke="#E01010" stroke-width="1.2"/><path d="M612.5 422h15M623 418l4.5 4-4.5 4" fill="none" stroke="#E01010" stroke-width="1.2"/><path d="M626 435 L636 426 M632.5 423 L646.5 416 L638 428.5 Z" fill="none" stroke="#E01010" stroke-width="1.2"/><path d="M285.5 257h3l1 1v3l-1 1h-3l-1 -1v-3z" fill="#003F00"/><path d="M373.5 257h3l1 1v3l-1 1h-3l-1 -1v-3z" fill="#003F00"/><path d="M373.5 407h3l1 1v3l-1 1h-3l-1 -1v-3z" fill="#003F00"/><path d="M461.5 358h3l1 1v3l-1 1h-3l-1 -1v-3z" fill="#003F00"/><path d="M524.5 358h3l1 1v3l-1 1h-3l-1 -1v-3z" fill="#003F00"/><path d="M599.5 358h3l1 1v3l-1 1h-3l-1 -1v-3z" fill="#003F00"/><path d="M461.5 457h3l1 1v3l-1 1h-3l-1 -1v-3z" fill="#003F00"/><path d="M524.5 457h3l1 1v3l-1 1h-3l-1 -1v-3z" fill="#003F00"/><path d="M247.5 546h3l1 1v3l-1 1h-3l-1 -1v-3z" fill="#003F00"/><path d="M285.5 546h3l1 1v3l-1 1h-3l-1 -1v-3z" fill="#003F00"/><path d="M373.5 546h3l1 1v3l-1 1h-3l-1 -1v-3z" fill="#003F00"/><path d="M411.5 546h3l1 1v3l-1 1h-3l-1 -1v-3z" fill="#003F00"/><path d="M461.5 546h3l1 1v3l-1 1h-3l-1 -1v-3z" fill="#003F00"/><text x="387" y="299" font-family="Liberation Sans" font-size="16.5" font-weight="normal" fill="#000" letter-spacing="-0.6">R2</text><text x="387" y="313.5" font-family="Liberation Sans" font-size="10" font-weight="normal" fill="#000" stroke="#000" stroke-width="0.25">10k</text><text x="387" y="325" font-family="Liberation Sans" font-size="10" font-weight="normal" fill="#808080" letter-spacing="0.4">&lt;TEXT&gt;</text><text x="484" y="299" font-family="Liberation Sans" font-size="16.5" font-weight="normal" fill="#000" letter-spacing="-0.6">L1</text><text x="484" y="313.5" font-family="Liberation Sans" font-size="10" font-weight="normal" fill="#000" stroke="#000" stroke-width="0.25">150nH</text><text x="484" y="325" font-family="Liberation Sans" font-size="10" font-weight="normal" fill="#808080" letter-spacing="0.4">&lt;TEXT&gt;</text><text x="470" y="400" font-family="Liberation Sans" font-size="16.5" font-weight="normal" fill="#000" letter-spacing="-0.6">Q1</text><text x="470" y="414.5" font-family="Liberation Sans" font-size="10" font-weight="normal" fill="#000" stroke="#000" stroke-width="0.25">2N2222</text><text x="470" y="426" font-family="Liberation Sans" font-size="10" font-weight="normal" fill="#808080" letter-spacing="0.4">&lt;TEXT&gt;</text><text x="546" y="411" font-family="Liberation Sans" font-size="16.5" font-weight="normal" fill="#000" letter-spacing="-0.6">C3</text><text x="546" y="425.5" font-family="Liberation Sans" font-size="10" font-weight="normal" fill="#000" stroke="#000" stroke-width="0.25">100pF</text><text x="546" y="437" font-family="Liberation Sans" font-size="10" font-weight="normal" fill="#808080" letter-spacing="0.4">&lt;TEXT&gt;</text><text x="307" y="500" font-family="Liberation Sans" font-size="16.5" font-weight="normal" fill="#000" letter-spacing="-0.6">C1</text><text x="307" y="514.5" font-family="Liberation Sans" font-size="10" font-weight="normal" fill="#000" stroke="#000" stroke-width="0.25">100nF</text><text x="307" y="526" font-family="Liberation Sans" font-size="10" font-weight="normal" fill="#808080" letter-spacing="0.4">&lt;TEXT&gt;</text><text x="388" y="500" font-family="Liberation Sans" font-size="16.5" font-weight="normal" fill="#000" letter-spacing="-0.6">R3</text><text x="388" y="514.5" font-family="Liberation Sans" font-size="10" font-weight="normal" fill="#000" stroke="#000" stroke-width="0.25">10k</text><text x="388" y="526" font-family="Liberation Sans" font-size="10" font-weight="normal" fill="#808080" letter-spacing="0.4">&lt;TEXT&gt;</text><text x="476" y="500" font-family="Liberation Sans" font-size="16.5" font-weight="normal" fill="#000" letter-spacing="-0.6">R1</text><text x="476" y="514.5" font-family="Liberation Sans" font-size="10" font-weight="normal" fill="#000" stroke="#000" stroke-width="0.25">2.2k</text><text x="476" y="526" font-family="Liberation Sans" font-size="10" font-weight="normal" fill="#808080" letter-spacing="0.4">&lt;TEXT&gt;</text><text x="547" y="512" font-family="Liberation Sans" font-size="16.5" font-weight="normal" fill="#000" letter-spacing="-0.6">C2</text><text x="547" y="526.5" font-family="Liberation Sans" font-size="10" font-weight="normal" fill="#000" stroke="#000" stroke-width="0.25">100pF</text><text x="547" y="538" font-family="Liberation Sans" font-size="10" font-weight="normal" fill="#808080" letter-spacing="0.4">&lt;TEXT&gt;</text><text x="207" y="244" font-family="Liberation Sans" font-size="9" font-weight="bold" fill="#1A1A8C" >+5V</text><text x="188" y="256" font-family="Liberation Sans" font-size="10" font-weight="normal" fill="#808080" >&lt;TEXT&gt;</text><text x="652" y="346" font-family="Liberation Mono" font-size="11" font-weight="normal" fill="#1E1E90" >OSC_V</text><text x="652" y="445" font-family="Liberation Mono" font-size="11" font-weight="normal" fill="#E01010" >OSC_I</text><rect x="614" y="122" width="377" height="188" fill="#001A00"/><rect x="614" y="122" width="377" height="11" fill="#00C000"/><text transform="translate(726 132) scale(1.15 1)" x="0" y="0" font-family="Liberation Mono" font-size="10.5" fill="#001800" letter-spacing="1.46" stroke="#001800" stroke-width="0.2">ANALOGUE ANALYSIS</text><rect x="717" y="134" width="1" height="162" fill="#D8D8C8"/><rect x="784" y="134" width="1" height="162" fill="#D8D8C8"/><rect x="851" y="134" width="1" height="162" fill="#D8D8C8"/><rect x="918" y="134" width="1" height="162" fill="#D8D8C8"/><rect x="650" y="176" width="335" height="1" fill="#D8D8C8"/><rect x="650" y="216" width="335" height="1" fill="#D8D8C8"/><rect x="650" y="256" width="335" height="1" fill="#D8D8C8"/><path d="M651 136.5h3M651 140.5h3M651 144.5h3M651 148.5h3M651 152.5h3M651 156.5h3M651 160.5h3M651 164.5h3M651 168.5h3M651 172.5h3M651 176.5h3M651 180.5h3M651 184.5h3M651 188.5h3M651 192.5h3M651 196.5h3M651 200.5h3M651 204.5h3M651 208.5h3M651 212.5h3M651 216.5h3M651 220.5h3M651 224.5h3M651 228.5h3M651 232.5h3M651 236.5h3M651 240.5h3M651 244.5h3M651 248.5h3M651 252.5h3M651 256.5h3M651 260.5h3M651 264.5h3M651 268.5h3M651 272.5h3M651 276.5h3M651 280.5h3M651 284.5h3M651 288.5h3M651 292.5h3M651 296.5h3M650.5 296v-3M657.5 296v-3M664.5 296v-3M671.5 296v-3M678.5 296v-3M685.5 296v-3M692.5 296v-3M699.5 296v-3M706.5 296v-3M713.5 296v-3M720.5 296v-3M727.5 296v-3M734.5 296v-3M741.5 296v-3M748.5 296v-3M755.5 296v-3M762.5 296v-3M769.5 296v-3M776.5 296v-3M783.5 296v-3M790.5 296v-3M797.5 296v-3M804.5 296v-3M811.5 296v-3M818.5 296v-3M825.5 296v-3M832.5 296v-3M839.5 296v-3M846.5 296v-3M853.5 296v-3M860.5 296v-3M867.5 296v-3M874.5 296v-3M881.5 296v-3M888.5 296v-3M895.5 296v-3M902.5 296v-3M909.5 296v-3M916.5 296v-3M923.5 296v-3M930.5 296v-3M937.5 296v-3M944.5 296v-3M951.5 296v-3M958.5 296v-3M965.5 296v-3M972.5 296v-3M979.5 296v-3" stroke="#D8D8C8" stroke-width="1"/><polyline points="650.0,216.5 650.5,216.5 651.0,216.5 651.5,216.5 652.0,216.5 652.5,216.5 653.0,216.5 653.5,216.5 654.0,216.5 654.5,216.5 655.0,216.5 655.5,216.5 656.0,216.5 656.5,216.5 657.0,216.5 657.5,216.5 658.0,216.5 658.5,216.5 659.0,216.5 659.5,216.5 660.0,216.5 660.5,216.5 661.0,216.5 661.5,216.5 662.0,216.5 662.5,216.5 663.0,216.5 663.5,216.5 664.0,216.5 664.5,216.5 665.0,216.5 665.5,216.5 666.0,216.5 666.5,216.5 667.0,216.5 667.5,216.5 668.0,216.5 668.5,216.5 669.0,216.5 669.5,216.5 670.0,216.5 670.5,216.5 671.0,216.5 671.5,216.5 672.0,216.5 672.5,216.5 673.0,216.5 673.5,216.5 674.0,216.5 674.5,216.5 675.0,216.5 675.5,216.5 676.0,216.5 676.5,216.5 677.0,216.5 677.5,216.5 678.0,216.5 678.5,216.5 679.0,216.5 679.5,216.5 680.0,216.5 680.5,216.5 681.0,216.5 681.5,216.5 682.0,216.5 682.5,216.5 683.0,216.5 683.5,216.5 684.0,216.5 684.5,216.5 685.0,216.5 685.5,216.5 686.0,216.5 686.5,216.5 687.0,216.5 687.5,216.5 688.0,216.5 688.5,216.5 689.0,216.5 689.5,216.5 690.0,216.5 690.5,216.5 691.0,216.5 691.5,216.5 692.0,216.5 692.5,216.5 693.0,216.5 693.5,216.5 694.0,216.5 694.5,216.5 695.0,216.5 695.5,216.5 696.0,216.5 696.5,216.5 697.0,216.5 697.5,216.5 698.0,216.5 698.5,216.5 699.0,216.5 699.5,216.5 700.0,216.5 700.5,216.6 701.0,216.6 701.5,216.5 702.0,216.3 702.5,216.1 703.0,215.9 703.5,215.9 704.0,216.1 704.5,216.4 705.0,216.9 705.5,217.4 706.0,217.7 706.5,217.8 707.0,217.5 707.5,216.9 708.0,216.1 708.5,215.4 709.0,214.8 709.5,214.5 710.0,214.8 710.5,215.5 711.0,216.5 711.5,217.7 712.0,218.6 712.5,219.1 713.0,219.0 713.5,218.3 714.0,217.1 714.5,215.6 715.0,214.2 715.5,213.3 716.0,213.1 716.5,213.7 717.0,215.1 717.5,216.9 718.0,218.7 718.5,220.1 719.0,220.7 719.5,220.4 720.0,219.0 720.5,217.0 721.0,214.7 721.5,212.7 722.0,211.6 722.5,211.4 723.0,212.5 723.5,214.8 724.0,217.7 724.5,220.6 725.0,222.8 725.5,223.6 726.0,222.7 726.5,220.2 727.0,216.6 727.5,212.6 728.0,209.3 728.5,207.6 729.0,207.9 729.5,210.2 730.0,214.3 730.5,219.5 731.0,224.4 731.5,227.8 732.0,228.7 732.5,226.6 733.0,221.9 733.5,215.4 734.0,208.7 734.5,203.4 735.0,201.0 735.5,202.2 736.0,207.0 736.5,214.4 737.0,222.8 737.5,230.1 738.0,234.5 738.5,234.7 739.0,230.6 739.5,222.8 740.0,213.1 740.5,203.8 741.0,197.1 741.5,194.7 742.0,197.6 742.5,205.1 743.0,215.7 743.5,227.0 744.0,236.2 744.5,241.1 745.0,240.3 745.5,233.7 746.0,222.6 746.5,209.7 747.0,197.9 747.5,190.2 748.0,188.4 748.5,193.5 749.0,204.2 749.5,218.1 750.0,232.0 750.5,242.6 751.0,247.2 751.5,244.6 752.0,235.2 752.5,221.2 753.0,205.6 753.5,192.3 754.0,184.5 754.5,184.1 755.0,191.4 755.5,204.9 756.0,221.4 756.5,236.9 757.0,247.9 757.5,251.6 758.0,247.0 758.5,235.1 759.0,218.6 759.5,201.4 760.0,187.5 760.5,180.2 761.0,181.5 761.5,191.1 762.0,206.9 762.5,225.1 763.0,241.6 763.5,252.3 764.0,254.7 764.5,248.1 765.0,233.9 765.5,215.3 766.0,196.9 766.5,182.8 767.0,176.5 767.5,179.6 768.0,191.6 768.5,209.5 769.0,229.4 769.5,246.4 770.0,256.5 770.5,257.3 771.0,248.4 771.5,231.9 772.0,211.5 772.5,192.1 773.0,178.2 773.5,173.2 774.0,178.5 774.5,192.8 775.0,212.9 775.5,233.9 776.0,251.0 776.5,260.0 777.0,258.9 777.5,247.7 778.0,229.1 778.5,207.3 779.0,187.6 779.5,174.6 780.0,171.4 780.5,178.8 781.0,195.2 781.5,216.7 782.0,238.3 782.5,254.9 783.0,262.4 783.5,259.2 784.0,245.9 784.5,225.5 785.0,203.0 785.5,183.5 786.0,171.8 786.5,170.5 787.0,180.1 787.5,198.3 788.0,220.9 788.5,242.6 789.0,258.3 789.5,264.2 790.0,258.9 790.5,243.5 791.0,221.7 791.5,198.5 792.0,179.4 792.5,169.0 793.0,169.7 793.5,181.5 794.0,201.6 794.5,225.4 795.0,247.1 795.5,261.8 796.0,265.8 796.5,258.2 797.0,240.7 797.5,217.5 798.0,193.9 798.5,175.5 799.0,166.7 799.5,169.6 800.0,183.6 800.5,205.5 801.0,229.9 801.5,251.3 802.0,264.5 802.5,266.4 803.0,256.6 803.5,237.3 804.0,213.0 804.5,189.5 805.0,172.4 805.5,165.6 806.0,170.8 806.5,186.8 807.0,209.8 807.5,234.4 808.0,254.8 808.5,266.2 809.0,265.9 809.5,254.0 810.0,233.2 810.5,208.5 811.0,185.6 811.5,170.0 812.0,165.3 812.5,172.7 813.0,190.4 813.5,214.2 814.0,238.6 814.5,257.8 815.0,267.3 815.5,264.8 816.0,251.0 816.5,229.0 817.0,204.0 817.5,182.0 818.0,168.1 818.5,165.5 819.0,175.0 819.5,194.3 820.0,218.8 820.5,242.8 821.0,260.6 821.5,268.0 822.0,263.4 822.5,247.6 823.0,224.6 823.5,199.6 824.0,178.6 824.5,166.5 825.0,166.1 825.5,177.7 826.0,198.4 826.5,223.3 827.0,246.7 827.5,263.0 828.0,268.3 828.5,261.5 829.0,244.0 829.5,220.1 830.0,195.2 830.5,175.4 831.0,165.3 831.5,167.2 832.0,180.7 832.5,202.6 833.0,227.9 833.5,250.5 834.0,265.1 834.5,268.2 835.0,259.2 835.5,240.1 836.0,215.5 836.5,191.0 837.0,172.6 837.5,164.4 838.0,168.6 838.5,184.0 839.0,207.1 839.5,232.4 840.0,254.0 840.5,266.8 841.0,267.7 841.5,256.6 842.0,236.1 842.5,210.9 843.0,187.0 843.5,170.0 844.0,164.0 844.5,170.4 845.0,187.6 845.5,211.6 846.0,236.8 846.5,257.2 847.0,268.0 847.5,266.7 848.0,253.6 848.5,231.7 849.0,206.3 849.5,183.2 850.0,168.0 850.5,164.2 851.0,172.7 851.5,191.6 852.0,216.2 852.5,241.0 853.0,260.0 853.5,268.7 854.0,265.2 854.5,250.2 855.0,227.2 855.5,201.8 856.0,179.8 856.5,166.4 857.0,164.9 857.5,175.5 858.0,195.7 858.5,220.9 859.0,245.0 859.5,262.4 860.0,269.0 860.5,263.2 861.0,246.5 861.5,222.7 862.0,197.4 862.5,176.6 863.0,165.2 863.5,165.9 864.0,178.5 864.5,200.1 865.0,225.5 865.5,248.8 866.0,264.5 866.5,268.9 867.0,260.9 867.5,242.6 868.0,218.0 868.5,193.2 869.0,173.8 869.5,164.4 870.0,167.4 870.5,181.9 871.0,204.5 871.5,230.0 872.0,252.3 872.5,266.2 873.0,268.3 873.5,258.3 874.0,238.4 874.5,213.4 875.0,189.1 875.5,171.2 876.0,164.0 876.5,169.2 877.0,185.5 877.5,209.1 878.0,234.4 878.5,255.5 879.0,267.5 879.5,267.4 880.0,255.4 880.5,234.2 881.0,208.8 881.5,185.3 882.0,169.1 882.5,164.1 883.0,171.4 883.5,189.3 884.0,213.7 884.5,238.7 885.0,258.5 885.5,268.4 886.0,266.1 886.5,252.1 887.0,229.7 887.5,204.3 888.0,181.7 888.5,167.3 889.0,164.5 889.5,173.9 890.0,193.4 890.5,218.3 891.0,242.8 891.5,261.1 892.0,268.9 892.5,264.4 893.0,248.6 893.5,225.2 894.0,199.8 894.5,178.3 895.0,165.9 895.5,165.3 896.0,176.8 896.5,197.6 897.0,222.9 897.5,246.7 898.0,263.4 898.5,269.0 899.0,262.3 899.5,244.8 900.0,220.6 900.5,195.5 901.0,175.3 901.5,164.8 902.0,166.5 902.5,180.0 903.0,202.0 903.5,227.5 904.0,250.4 904.5,265.3 905.0,268.7 905.5,259.8 906.0,240.8 906.5,216.0 907.0,191.3 907.5,172.6 908.0,164.2 908.5,168.1 909.0,183.4 909.5,206.5 910.0,232.0 910.5,253.8 911.0,266.8 911.5,268.0 912.0,257.0 912.5,236.6 913.0,211.4 913.5,187.4 914.0,170.2 914.5,164.0 915.0,170.1 915.5,187.2 916.0,211.1 916.5,236.3 917.0,256.9 917.5,267.9 918.0,266.9 918.5,253.9 919.0,232.2 919.5,206.8 920.0,183.6 920.5,168.2 921.0,164.2 921.5,172.5 922.0,191.1 922.5,215.7 923.0,240.5 923.5,259.7 924.0,268.7 924.5,265.4 925.0,250.6 925.5,227.7 926.0,202.3 926.5,180.2 927.0,166.6 927.5,164.8 928.0,175.2 928.5,195.3 929.0,220.4 929.5,244.5 930.0,262.1 930.5,269.0 931.0,263.5 931.5,246.9 932.0,223.2 932.5,197.9 933.0,177.0 933.5,165.4 934.0,165.8 934.5,178.2 935.0,199.6 935.5,225.0 936.0,248.3 936.5,264.2 937.0,268.9 937.5,261.2 938.0,243.0 938.5,218.6 939.0,193.6 939.5,174.1 940.0,164.5 940.5,167.2 941.0,181.5 941.5,204.0 942.0,229.5 942.5,251.9 943.0,266.0 943.5,268.4 944.0,258.6 944.5,238.9 945.0,213.9 945.5,189.5 946.0,171.5 946.5,164.1 947.0,169.0 947.5,185.1 948.0,208.6 948.5,233.9 949.0,255.2 949.5,267.3 950.0,267.5 950.5,255.7 951.0,234.6 951.5,209.3 952.0,185.7 952.5,169.3 953.0,164.0 953.5,171.1 954.0,188.9 954.5,213.2 955.0,238.2 955.5,258.2 956.0,268.3 956.5,266.2 957.0,252.5 957.5,230.2 958.0,204.8 958.5,182.1 959.0,167.5 959.5,164.4 960.0,173.6 960.5,192.9 961.0,217.8 961.5,242.3 962.0,260.8 962.5,268.8 963.0,264.6 963.5,249.0 964.0,225.7 964.5,200.3 965.0,178.7 965.5,166.0 966.0,165.2 966.5,176.5 967.0,197.2 967.5,222.4 968.0,246.3 968.5,263.1 969.0,269.0 969.5,262.5 970.0,245.2 970.5,221.1 971.0,196.0 971.5,175.6 972.0,164.9 972.5,166.4 973.0,179.6 973.5,201.5 974.0,227.0 974.5,250.0 975.0,265.1 975.5,268.7 976.0,260.1 976.5,241.2 977.0,216.5 977.5,191.8 978.0,172.9 978.5,164.3 979.0,167.9 979.5,183.0 980.0,206.0 980.5,231.5 981.0,253.4 981.5,266.6 982.0,268.1 982.5,257.4 983.0,237.0 983.5,211.9 984.0,187.8 984.5,170.5 985.0,164.0" fill="none" stroke="#48EC48" stroke-width="1.15"/><rect x="650.5" y="136.5" width="335" height="160" fill="none" stroke="#D8D8C8" stroke-width="1.2"/><text x="648" y="144.5" font-family="Liberation Mono" font-size="10" fill="#38C4D0" text-anchor="end">6.00</text><text x="648" y="180" font-family="Liberation Mono" font-size="10" fill="#38C4D0" text-anchor="end">5.50</text><text x="648" y="220" font-family="Liberation Mono" font-size="10" fill="#38C4D0" text-anchor="end">5.00</text><text x="648" y="260" font-family="Liberation Mono" font-size="10" fill="#38C4D0" text-anchor="end">4.50</text><text x="648" y="295" font-family="Liberation Mono" font-size="10" fill="#38C4D0" text-anchor="end">4.00</text><text x="650" y="305" font-family="Liberation Mono" font-size="10" fill="#38C4D0" text-anchor="start">0.00</text><text x="717" y="305" font-family="Liberation Mono" font-size="10" fill="#38C4D0" text-anchor="middle">200n</text><text x="784" y="305" font-family="Liberation Mono" font-size="10" fill="#38C4D0" text-anchor="middle">400n</text><text x="851" y="305" font-family="Liberation Mono" font-size="10" fill="#38C4D0" text-anchor="middle">600n</text><text x="918" y="305" font-family="Liberation Mono" font-size="10" fill="#38C4D0" text-anchor="middle">800n</text><text x="986" y="305" font-family="Liberation Mono" font-size="10" fill="#38C4D0" text-anchor="end">1.00u</text><text x="655" y="144.5" font-family="Liberation Mono" font-size="10" fill="#40D840" text-anchor="start">OSC_V</text><text x="655" y="155" font-family="Liberation Mono" font-size="10" fill="#E02020" text-anchor="start">OSC_I</text></svg>
<div class="a" style="left:3px;top:709px;width:3px;height:22px;border-left:1px solid #fff;border-right:1px solid #ACA899;background:#E6E3D3"></div>
<svg class="a" style="left:11px;top:711px" width="16" height="16"><path d="M12.5 5A5.5 5.5 0 1 0 13 10" fill="none" stroke="#1E4E9E" stroke-width="2.4"/><path d="M14.5 1v6h-6z" fill="#1E4E9E"/></svg>
<svg class="a" style="left:32px;top:711px" width="16" height="16"><path d="M3.5 5A5.5 5.5 0 1 1 3 10" fill="none" stroke="#1E4E9E" stroke-width="2.4"/><path d="M1.5 1v6h6z" fill="#1E4E9E"/></svg>
<div class="a" style="left:53px;top:711px;width:27px;height:17px;background:#fff;border-top:1px solid #000;border-left:1px solid #000;border-right:1px solid #fff;border-bottom:1px solid #fff"></div>
<div class="t" style="left:55px;top:713px;font-size:12px">0&#176;</div>
<div class="a" style="left:84px;top:710px;width:2px;height:20px;border-left:1px solid #ACA899;border-right:1px solid #fff"></div>
<svg class="a" style="left:89px;top:711px" width="17" height="16"><path d="M1 8l5-5v3h5V3l5 5-5 5v-3H6v3z" fill="#3C64B4" stroke="#2A4A8A" stroke-width=".5"/></svg>
<svg class="a" style="left:110px;top:711px" width="16" height="17"><path d="M8 1l5 5h-3v5h3l-5 5-5-5h3V6H3z" fill="#4C74C0" stroke="#2A4A8A" stroke-width=".5"/></svg>
<div class="a" style="left:135px;top:708px;width:2px;height:24px;border-left:1px solid #ACA899;border-right:1px solid #fff"></div>
<div class="a" style="left:138px;top:709px;width:3px;height:22px;border-left:1px solid #fff;border-right:1px solid #ACA899;background:#E6E3D3"></div>
<div class="a" style="left:146px;top:711px;width:157px;height:18px;border:1px solid #000;background:#000"></div>
<div class="a" style="left:147px;top:712px;width:38px;height:16px;background:#ECE9D8;border-top:1px solid #fff;border-left:1px solid #fff;border-bottom:2px solid #ACA899;border-right:1px solid #ACA899"></div>
<div class="a" style="left:186px;top:712px;width:38px;height:16px;background:#ECE9D8;border-top:1px solid #fff;border-left:1px solid #fff;border-bottom:2px solid #ACA899;border-right:1px solid #ACA899"></div>
<div class="a" style="left:225px;top:712px;width:38px;height:16px;background:#ECE9D8;border-top:1px solid #fff;border-left:1px solid #fff;border-bottom:2px solid #ACA899;border-right:1px solid #ACA899"></div>
<div class="a" style="left:264px;top:712px;width:38px;height:16px;background:#ECE9D8;border-top:1px solid #fff;border-left:1px solid #fff;border-bottom:2px solid #ACA899;border-right:1px solid #ACA899"></div>
<svg class="a" style="left:160px;top:714px" width="12" height="12"><path d="M3 1l7 5-7 5z" fill="#000"/></svg>
<svg class="a" style="left:198px;top:714px" width="14" height="12"><rect x="2" y="1" width="2" height="10" fill="#000"/><path d="M6 1l6 5-6 5z" fill="#000"/></svg>
<svg class="a" style="left:237px;top:714px" width="12" height="12"><rect x="3" y="1" width="2.5" height="10" fill="#000"/><rect x="7" y="1" width="2.5" height="10" fill="#000"/></svg>
<svg class="a" style="left:276px;top:714px" width="12" height="12"><rect x="1" y="1" width="10" height="10" fill="#000"/></svg>
<div class="a" style="left:308px;top:710px;width:98px;height:20px;border-top:1px solid #ACA899;border-left:1px solid #ACA899;border-right:1px solid #fff;border-bottom:1px solid #fff"></div>
<svg class="a" style="left:312px;top:712px" width="16" height="16"><circle cx="7.5" cy="7.5" r="6.5" fill="#C01818" stroke="#801010"/><path d="M5 5l5 5M10 5l-5 5" stroke="#fff" stroke-width="2"/></svg>
<div class="t" style="left:346px;top:715px;font-size:11.5px;letter-spacing:-0.5px;color:#C01010">1 Error(s)</div>
<div class="a" style="left:411px;top:708px;width:2px;height:24px;border-left:1px solid #ACA899;border-right:1px solid #fff"></div>
<div class="a" style="left:415px;top:709px;width:3px;height:22px;border-left:1px solid #fff;border-right:1px solid #ACA899;background:#E6E3D3"></div>
<div class="a" style="left:422px;top:712px;width:300px;height:18px;border-top:1px solid #ACA899;border-left:1px solid #ACA899;border-bottom:1px solid #fff"></div>
<div class="t" style="left:425px;top:715px;font-size:11px;letter-spacing:-0.2px">Root sheet 1</div>
<div class="a" style="left:885px;top:708px;width:2px;height:24px;border-left:1px solid #ACA899;border-right:1px solid #fff"></div>
<div class="a" style="left:889px;top:709px;width:3px;height:22px;border-left:1px solid #fff;border-right:1px solid #ACA899;background:#E6E3D3"></div>
<div class="t" style="left:922px;top:715px;font-size:11px;letter-spacing:-0.2px">+0.0</div>
<div class="t" style="left:959px;top:715px;font-size:11px;letter-spacing:-0.2px">+500.0</div>
<div class="t" style="left:1008px;top:715px;font-size:11.5px;color:#0A1E70">th</div>
<div class="a" style="left:688px;top:388px;width:340px;height:326px;background:#0856EA;border-radius:3px 0 0 0;border-left:1px solid #2A70F0;border-top:1px solid #4A90FF"></div>
<div class="a" style="left:689px;top:389px;width:340px;height:21px;background:linear-gradient(#1E6CF4,#0C60F0 30%,#1070FF 70%,#1A7CFF)"></div>
<div class="t" style="left:692px;top:396px;font-size:11px;font-weight:bold;color:#fff">SIMULATION ERROR LOG</div>
<div class="a" style="left:692px;top:410px;width:340px;height:300px;background:#fff;border-left:1px solid #1A1A60;border-top:1px solid #1A1A60;border-bottom:1px solid #10106A"></div>
<div class="a" style="left:693px;top:411px;width:340px;height:17px;background:#ECE9D8;border-bottom:1px solid #ACA899"></div>
<div class="a" style="left:693px;top:427px;width:340px;height:1px;background:#D6D2C2"></div>
<div class="t" style="left:699px;top:415px;font-size:11px;letter-spacing:-0.3px">Message</div>
<div class="a" style="left:693px;top:428px;width:331px;height:280px;overflow:hidden">
<svg class="a" style="left:3px;top:3px" width="14" height="14"><circle cx="7" cy="7" r="6.5" fill="#1E961E" stroke="#0A5A0A"/><rect x="5.8" y="6" width="2.6" height="5.5" fill="#fff"/><rect x="5.8" y="2.5" width="2.6" height="2.3" fill="#fff"/></svg>
<div class="t" style="left:20px;top:4px;font-size:12px;transform:scaleX(0.88);transform-origin:0 0;color:#000">ISIS Release 7.06.00 (Build 8304) (C) Labcenter Electronics 1990-2008</div>
<svg class="a" style="left:3px;top:19px" width="14" height="14"><circle cx="7" cy="7" r="6.5" fill="#1E961E" stroke="#0A5A0A"/><rect x="5.8" y="6" width="2.6" height="5.5" fill="#fff"/><rect x="5.8" y="2.5" width="2.6" height="2.3" fill="#fff"/></svg>
<div class="t" style="left:20px;top:20px;font-size:12px;transform:scaleX(0.88);transform-origin:0 0;color:#000">Source code build completed OK.</div>
<svg class="a" style="left:3px;top:35px" width="14" height="14"><circle cx="7" cy="7" r="6.5" fill="#1E961E" stroke="#0A5A0A"/><rect x="5.8" y="6" width="2.6" height="5.5" fill="#fff"/><rect x="5.8" y="2.5" width="2.6" height="2.3" fill="#fff"/></svg>
<div class="t" style="left:20px;top:36px;font-size:12px;transform:scaleX(0.88);transform-origin:0 0;color:#000">Compiling design 'C:\Program Files\Labcenter Electronics\Proteus 7 Professional'</div>
<svg class="a" style="left:3px;top:51px" width="14" height="14"><circle cx="7" cy="7" r="6.5" fill="#1E961E" stroke="#0A5A0A"/><rect x="5.8" y="6" width="2.6" height="5.5" fill="#fff"/><rect x="5.8" y="2.5" width="2.6" height="2.3" fill="#fff"/></svg>
<div class="t" style="left:20px;top:52px;font-size:12px;transform:scaleX(0.88);transform-origin:0 0;color:#000">Netlist compilation completed OK.</div>
<svg class="a" style="left:3px;top:67px" width="14" height="14"><circle cx="7" cy="7" r="6.5" fill="#1E961E" stroke="#0A5A0A"/><rect x="5.8" y="6" width="2.6" height="5.5" fill="#fff"/><rect x="5.8" y="2.5" width="2.6" height="2.3" fill="#fff"/></svg>
<div class="t" style="left:20px;top:68px;font-size:12px;transform:scaleX(0.88);transform-origin:0 0;color:#000">Netlist linking completed OK.</div>
<svg class="a" style="left:3px;top:83px" width="14" height="14"><circle cx="7" cy="7" r="6.5" fill="#1E961E" stroke="#0A5A0A"/><rect x="5.8" y="6" width="2.6" height="5.5" fill="#fff"/><rect x="5.8" y="2.5" width="2.6" height="2.3" fill="#fff"/></svg>
<div class="t" style="left:20px;top:84px;font-size:12px;transform:scaleX(0.88);transform-origin:0 0;color:#000">Partition analysis completed OK.</div>
<svg class="a" style="left:3px;top:99px" width="14" height="14"><circle cx="7" cy="7" r="6.5" fill="#1E961E" stroke="#0A5A0A"/><rect x="5.8" y="6" width="2.6" height="5.5" fill="#fff"/><rect x="5.8" y="2.5" width="2.6" height="2.3" fill="#fff"/></svg>
<div class="t" style="left:20px;top:100px;font-size:12px;transform:scaleX(0.88);transform-origin:0 0;color:#000">Simulating partition [597EB101]</div>
<svg class="a" style="left:3px;top:115px" width="14" height="14"><circle cx="7" cy="7" r="6.5" fill="#1E961E" stroke="#0A5A0A"/><rect x="5.8" y="6" width="2.6" height="5.5" fill="#fff"/><rect x="5.8" y="2.5" width="2.6" height="2.3" fill="#fff"/></svg>
<div class="t" style="left:20px;top:116px;font-size:12px;transform:scaleX(0.88);transform-origin:0 0;color:#000">PROSPICE 7.06.00 (Build 7319) (C) Labcenter Electronics 1993-2008</div>
<svg class="a" style="left:3px;top:131px" width="14" height="14"><circle cx="7" cy="7" r="6.5" fill="#1E961E" stroke="#0A5A0A"/><rect x="5.8" y="6" width="2.6" height="5.5" fill="#fff"/><rect x="5.8" y="2.5" width="2.6" height="2.3" fill="#fff"/></svg>
<div class="t" style="left:20px;top:132px;font-size:12px;transform:scaleX(0.88);transform-origin:0 0;color:#000">Loaded netlist 'C:\DOCUME~1\Hach-off\LOCALS~1\Temp\LISA1234.SDF'</div>
<svg class="a" style="left:2px;top:147px" width="16" height="14"><path d="M8 0.5L15.5 13.5H0.5z" fill="#F8D820" stroke="#B09010"/><rect x="7" y="4" width="2" height="5.5" fill="#000"/><rect x="7" y="10.5" width="2" height="2" fill="#000"/></svg>
<div class="t" style="left:20px;top:148px;font-size:12px;transform:scaleX(0.88);transform-origin:0 0;color:#6C4E1E">[SPICE] singular matrix: check node <u style="color:#0000C0">#L1#branch</u>.</div>
<svg class="a" style="left:2px;top:163px" width="16" height="14"><path d="M8 0.5L15.5 13.5H0.5z" fill="#F8D820" stroke="#B09010"/><rect x="7" y="4" width="2" height="5.5" fill="#000"/><rect x="7" y="10.5" width="2" height="2" fill="#000"/></svg>
<div class="t" style="left:20px;top:164px;font-size:12px;transform:scaleX(0.88);transform-origin:0 0;color:#6C4E1E">[SPICE] singular matrix: check node <u style="color:#0000C0">#L1#branch</u>.</div>
<svg class="a" style="left:2px;top:179px" width="16" height="14"><path d="M8 0.5L15.5 13.5H0.5z" fill="#F8D820" stroke="#B09010"/><rect x="7" y="4" width="2" height="5.5" fill="#000"/><rect x="7" y="10.5" width="2" height="2" fill="#000"/></svg>
<div class="t" style="left:20px;top:180px;font-size:12px;transform:scaleX(0.88);transform-origin:0 0;color:#6C4E1E">[SPICE] Gmin stepping failed</div>
<svg class="a" style="left:2px;top:195px" width="16" height="14"><path d="M8 0.5L15.5 13.5H0.5z" fill="#F8D820" stroke="#B09010"/><rect x="7" y="4" width="2" height="5.5" fill="#000"/><rect x="7" y="10.5" width="2" height="2" fill="#000"/></svg>
<div class="t" style="left:20px;top:196px;font-size:12px;transform:scaleX(0.88);transform-origin:0 0;color:#6C4E1E">[SPICE] singular matrix: check node <u style="color:#0000C0">#L1#branch</u>.</div>
<svg class="a" style="left:2px;top:211px" width="16" height="14"><path d="M8 0.5L15.5 13.5H0.5z" fill="#F8D820" stroke="#B09010"/><rect x="7" y="4" width="2" height="5.5" fill="#000"/><rect x="7" y="10.5" width="2" height="2" fill="#000"/></svg>
<div class="t" style="left:20px;top:212px;font-size:12px;transform:scaleX(0.88);transform-origin:0 0;color:#6C4E1E">[SPICE] Source step [0 of 120] failed: source factor =   0.0000</div>
<svg class="a" style="left:2px;top:227px" width="16" height="14"><path d="M8 0.5L15.5 13.5H0.5z" fill="#F8D820" stroke="#B09010"/><rect x="7" y="4" width="2" height="5.5" fill="#000"/><rect x="7" y="10.5" width="2" height="2" fill="#000"/></svg>
<div class="t" style="left:20px;top:228px;font-size:12px;transform:scaleX(0.88);transform-origin:0 0;color:#6C4E1E">[SPICE] (null).</div>
<svg class="a" style="left:2px;top:243px" width="16" height="14"><path d="M8 0.5L15.5 13.5H0.5z" fill="#F8D820" stroke="#B09010"/><rect x="7" y="4" width="2" height="5.5" fill="#000"/><rect x="7" y="10.5" width="2" height="2" fill="#000"/></svg>
<div class="t" style="left:20px;top:244px;font-size:12px;transform:scaleX(0.88);transform-origin:0 0;color:#6C4E1E">Simulation failed to start.</div>
<svg class="a" style="left:3px;top:259px" width="14" height="14"><circle cx="7" cy="7" r="6.5" fill="#D02020" stroke="#901010"/><path d="M4.5 4.5l5 5M9.5 4.5l-5 5" stroke="#fff" stroke-width="2"/></svg>
<div class="t" style="left:20px;top:260px;font-size:12px;transform:scaleX(0.88);transform-origin:0 0;color:#C01010">Simulation FAILED due to fatal simulator errors.</div>
</div>
<div class="a" style="left:688px;top:710px;width:340px;height:4px;background:#0850E0"></div>
<div class="a" style="left:0;top:734px;width:1024px;height:34px;background:linear-gradient(#3C80F0 0px,#3C80F0 1px,#2A68E0 2px,#245EDC 5px,#245EDC 28px,#1E52C8 34px)"></div>
<div class="a" style="left:0;top:738px;width:136px;height:30px;border-radius:0 14px 14px 0;background:linear-gradient(#5AB85A,#3EA43E 25%,#38A038 60%,#2A802A);box-shadow:inset -3px 0 4px #206A20, inset 2px 1px 2px #7ACC7A"></div>
<svg class="a" style="left:9px;top:744px" width="22" height="20"><path d="M2 3q4-2 8 0v7q-4-2-8 0z" fill="#F05020"/><path d="M11 1q4-2 9 0v8q-4-2-9 0z" fill="#60C020"/><path d="M1 11q4-2 8 0v7q-4-2-8 0z" fill="#3070F0"/><path d="M10 10q4-2 9 0v8q-4-2-9 0z" fill="#F8C020"/></svg>
<div class="t" style="left:35px;top:744px;font-size:17.5px;font-weight:bold;font-style:italic;color:#fff;text-shadow:1px 1px 1px #1A5A1A">d&#233;marrer</div>
<svg class="a" style="left:144px;top:744px" width="6" height="22"><rect x="0" y="0" width="2" height="2" fill="#1A3A90"/><rect x="3" y="3" width="2" height="2" fill="#1A3A90"/><rect x="0" y="6" width="2" height="2" fill="#1A3A90"/><rect x="3" y="9" width="2" height="2" fill="#1A3A90"/><rect x="0" y="12" width="2" height="2" fill="#1A3A90"/><rect x="3" y="15" width="2" height="2" fill="#1A3A90"/><rect x="0" y="18" width="2" height="2" fill="#1A3A90"/></svg>
<div class="a" style="left:155px;top:742px;width:160px;height:24px;border-radius:3px;background:#1E4EC0;border:1px solid #1842A8"></div>
<svg class="a" style="left:166px;top:748px" width="16" height="12"><rect width="16" height="12" fill="#0000D0"/><rect x="2" y="1" width="1" height="1" fill="#fff"/><rect x="2" y="3" width="1" height="7" fill="#fff"/><rect x="2" y="9" width="6" height="1" fill="#fff"/><rect x="7" y="6" width="1" height="4" fill="#fff"/><rect x="4" y="6" width="4" height="1" fill="#fff"/><rect x="4" y="3" width="1" height="4" fill="#fff"/><rect x="4" y="3" width="5" height="1" fill="#fff"/><rect x="9" y="1" width="1" height="1" fill="#fff"/><rect x="9" y="3" width="1" height="7" fill="#fff"/><rect x="9" y="9" width="6" height="1" fill="#fff"/><rect x="14" y="6" width="1" height="4" fill="#fff"/><rect x="11" y="6" width="4" height="1" fill="#fff"/><rect x="11" y="3" width="1" height="4" fill="#fff"/><rect x="11" y="3" width="5" height="1" fill="#fff"/></svg>
<div class="t" style="left:186px;top:749px;font-size:11.5px;letter-spacing:-0.3px;color:#fff">Colpitts_wiki - ISIS Pr…</div>
<svg class="a" style="left:838px;top:743px" width="6" height="22"><rect x="0" y="0" width="2" height="2" fill="#1A3A90"/><rect x="3" y="3" width="2" height="2" fill="#1A3A90"/><rect x="0" y="6" width="2" height="2" fill="#1A3A90"/><rect x="3" y="9" width="2" height="2" fill="#1A3A90"/><rect x="0" y="12" width="2" height="2" fill="#1A3A90"/><rect x="3" y="15" width="2" height="2" fill="#1A3A90"/><rect x="0" y="18" width="2" height="2" fill="#1A3A90"/></svg>
<div class="t" style="left:851px;top:747px;font-size:12px;color:#fff">FR</div>
<div class="a" style="left:878px;top:734px;width:146px;height:34px;background:linear-gradient(#1CA4F0 0px,#18A0F0 1px,#0C8CE8 3px,#0C8CE8 30px,#0A78D8 34px);border-left:1px solid #1060C0"></div>
<svg class="a" style="left:888px;top:744px" width="110" height="18"><rect x="0" y="3" width="10" height="10" fill="#707888"/><path d="M6 16L11 6l5 10z" fill="#F8D020" stroke="#806000"/><circle cx="25" cy="8" r="6.5" fill="#A0A8B8" stroke="#506070"/><path d="M22 6l6 4" stroke="#fff"/><rect x="38" y="2" width="9" height="14" rx="1" fill="#3050C0" stroke="#102060"/><rect x="40" y="8" width="5" height="4" fill="#F04040"/><path d="M54 16l5-13h13l-5 13z" fill="#E02020"/><text x="56" y="13.5" font-size="9" font-weight="bold" font-family="Liberation Sans" fill="#fff" font-style="italic">ATI</text><rect x="73" y="1" width="16" height="16" fill="#203060"/><circle cx="81" cy="9" r="3" fill="none" stroke="#F8E020" stroke-width="1.5"/><path d="M76 5q-3 4 0 8M86 5q3 4 0 8" fill="none" stroke="#F8E020" stroke-width="1.3"/></svg>
<div class="t" style="left:982px;top:747px;font-size:12px;color:#fff">22:35</div>
</body></html>
